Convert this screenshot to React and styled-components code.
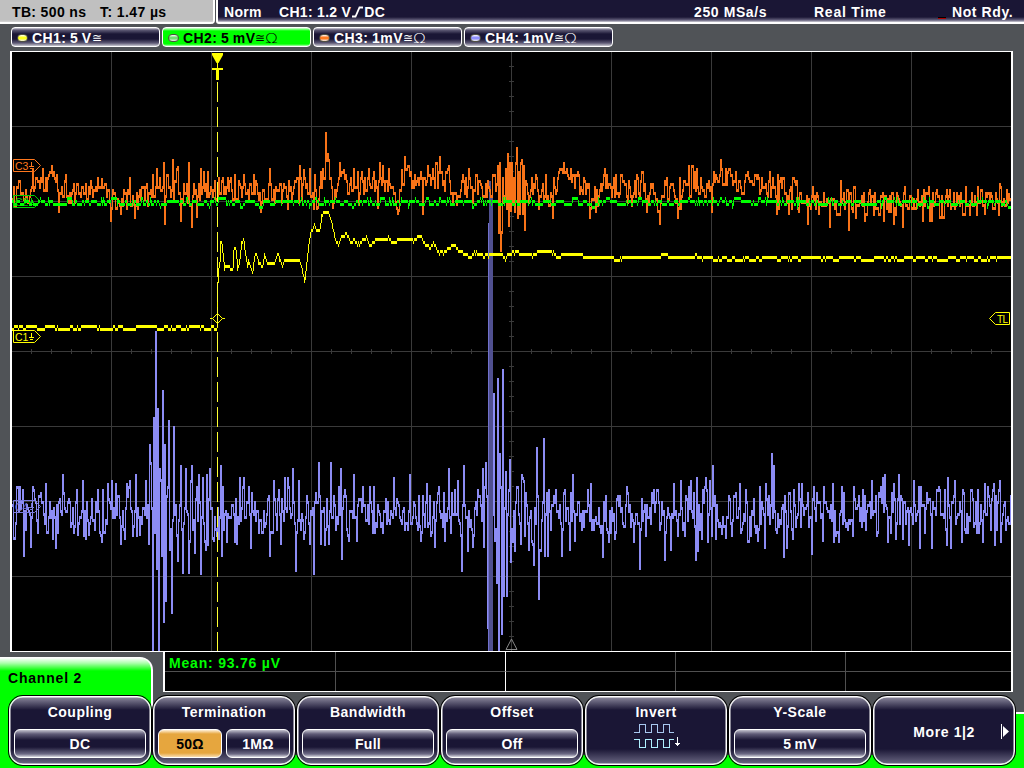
import React from 'react';
import styled, { createGlobalStyle, css } from 'styled-components';

const GlobalStyle = createGlobalStyle`
  body {
    margin: 0;
    background: #505357;
    overflow: hidden;
  }
`;

const NAVY = '#1a1635';

const Screen = styled.div`
  width: 1024px;
  height: 768px;
  display: flex;
  flex-direction: column;
  overflow: hidden;
  background: #505357;
  color: #fff;
  font: bold 14px 'Liberation Sans', Arial, sans-serif;
  letter-spacing: 0.6px;
  white-space: pre;
`;

const Header = styled.div`
  display: flex;
  height: 24px;
  line-height: 24px;
  flex: none;
`;

const TimeBase = styled.div`
  width: 215px;
  padding-left: 12px;
  box-sizing: border-box;
  display: grid;
  grid-template-columns: 88px 1fr;
  color: #000;
  background: linear-gradient(#c0c0c0 20px, #d8d8d8 22px, #fff 22px);
  border-right: 2px solid #fff;
  border-bottom-right-radius: 4px;
`;

const TriggerBar = styled.div`
  flex: 1;
  margin-left: 1px;
  padding-left: 6px;
  display: grid;
  grid-template-columns: 55px 415px 120px 138px 1fr;
  background: linear-gradient(${NAVY} 17px, #605c78 20px, #d0cfd8 22px, #fff 22px);
  border-left: 2px solid #fff;
  border-bottom-left-radius: 3px;
`;

const Item = styled.span`
  letter-spacing: ${(p) => p.$ls || 0.6}px;
`;

const NotReady = styled(Item)`
  display: flex;
  align-items: center;
  margin-left: -13px;

  &::before {
    content: '';
    width: 8px;
    height: 1px;
    margin: 12px 6px 0 -1px;
    background: #b00000;
    border-top: 1px solid #000;
  }
`;

const Channels = styled.div`
  display: flex;
  gap: 2px;
  padding: 3px 0 0 11px;
  height: 24px;
  flex: none;
`;

const Tag = styled.div`
  width: 149px;
  height: 20px;
  box-sizing: border-box;
  border: 1px solid #fff;
  border-radius: 4px;
  padding: 1px 0 0 5px;
  display: flex;
  align-items: center;
  letter-spacing: 0.45px;
  word-spacing: -0.8px;
  color: ${(p) => (p.$active ? '#000' : '#fff')};
  background: ${(p) =>
    p.$active
      ? 'linear-gradient(#d8ffd8, #00ff00 3px, #00ff00 16px, #b0ffb0)'
      : `linear-gradient(#d0cfd8, #5e5a75 2px, ${NAVY} 6px, ${NAVY} 11px, #5e5a75 15px, #c8c8d0)`};
`;

const Led = styled.span`
  width: 9px;
  height: 6px;
  margin-right: 4px;
  border-radius: 4px;
  border: 1px solid #505040;
  background: linear-gradient(#fff, ${(p) => p.$color} 40%, ${(p) => p.$color} 60%, #eee);
`;

const Thin = styled.span`
  font: ${(p) => p.$size}px 'DejaVu Sans', sans-serif;
  font-weight: 200;
  letter-spacing: 0;
  line-height: 16px;
  transform: scaleX(${(p) => p.$stretch || 1});
  transform-origin: left;
`;

const Scope = styled.div`
  width: 999px;
  height: 599px;
  flex: none;
  margin-left: 10px;
  background: #000;
  border: solid #fff;
  border-width: 1px 2px;

  svg {
    display: block;
  }
`;

const Measurements = styled.div`
  position: absolute;
  left: 163px;
  top: 651px;
  width: 850px;
  height: 41px;
  box-sizing: border-box;
  display: grid;
  grid-template-columns: 171px 170px 170px 170px 1fr;
  grid-template-rows: 20px 19px;
  border: solid #fff;
  border-width: 1px 2px;
  background: #000;
`;

const Cell = styled.div`
  box-sizing: border-box;
  color: #00ff00;
  line-height: 22px;
  padding-left: 4px;
  letter-spacing: 0.8px;
  border-bottom: ${(p) => (p.$top ? '1px solid #505050' : 'none')};
  border-right: ${(p) => (p.$last ? 'none' : `1px solid ${p.$center ? '#fff' : '#505050'}`)};
`;

const MenuArea = styled.div`
  flex: 1;
  display: flex;
  flex-direction: column;
  margin-top: -1px;
`;

const MenuTitle = styled.div`
  width: 153px;
  height: 38px;
  margin-top: 6px;
  box-sizing: border-box;
  padding: 12px 0 0 8px;
  color: #000;
  letter-spacing: 0.8px;
  border-right: 2px solid #fff;
  border-top: 1px solid #fff;
  border-top-right-radius: 13px;
  background: linear-gradient(#fff, #b0ffb0 5px, #00ff00 13px);
`;

const MenuBar = styled.div`
  flex: 1;
  display: flex;
  padding: 1px 8px 0;
  background:
    linear-gradient(#00ff00, #00ff00) 0 0 / 151px 100% no-repeat,
    linear-gradient(#fff, #fff) 151px 0 / 2px 14px no-repeat,
    linear-gradient(#505357 17px, #fff 17px, #fff 19px, #00ff00 19px) 1016px 0 / 8px 100% no-repeat,
    linear-gradient(#505357 60px, #00ff00 60px);
`;

const MenuItem = styled.div`
  width: 142px;
  height: 69px;
  margin: 0 1px;
  box-sizing: border-box;
  padding: 6px 4px 0;
  border: 1px solid #fff;
  border-radius: 14px;
  display: flex;
  flex-direction: column;
  align-items: center;
  background: linear-gradient(#8c899e, ${NAVY} 13px, ${NAVY} 52px, #6c6984);
  box-shadow: 0 0 0 1px #000, inset 0 0 0 0.5px #fff;
`;

const MenuLabel = styled.div`
  height: 26px;
  line-height: 18px;
  letter-spacing: 0.5px;
  flex: none;
`;

const Choices = styled.div`
  display: flex;
  gap: 4px;
  width: 132px;
`;

const Choice = styled.div`
  flex: 1;
  height: 29px;
  line-height: 29px;
  box-sizing: border-box;
  text-align: center;
  border: 1px solid #fff;
  border-radius: 6px;
  letter-spacing: 0.3px;
  word-spacing: -1px;
  background: linear-gradient(#c4c3cf, #5f5b77 4px, ${NAVY} 10px, ${NAVY} 17px, #6c6984 24px, #d8d8e0);
  ${(p) =>
    p.$selected &&
    css`
      color: #000;
      background: linear-gradient(#fff0d8, #e6a63e 4px, #e6a63e 23px, #f8dcb0);
    `}
`;

const InvertWrap = styled.div`
  margin: -6px 0 0 4px;
`;

const More = styled.div`
  display: flex;
  align-items: center;
  width: 100%;
  height: 57px;
  justify-content: flex-end;
  gap: 25px;
`;

// mulberry32
const rand = (seed) => {
  let a = seed;
  return () => {
    a = (a + 0x6d2b79f5) | 0;
    let t = Math.imul(a ^ (a >>> 15), 1 | a);
    t = (t + Math.imul(t ^ (t >>> 7), 61 | t)) ^ t;
    return ((t ^ (t >>> 14)) >>> 0) / 4294967296;
  };
};

const lerp = (pts, x) => {
  const i = pts.findIndex((p) => p[0] > x);
  if (i === 0) return pts[0][1];
  if (i < 0) return pts[pts.length - 1][1];
  const [x0, y0] = pts[i - 1];
  const [x1, y1] = pts[i];
  return y0 + ((y1 - y0) * (x - x0)) / (x1 - x0);
};

// flat list "x,y x,y" -> [[x, y], ...]
const parse = (s) => s.trim().split(/\s+/).map((p) => p.split(',').map(Number));

// one vertical stroke per pixel column, each level is 3px tall
// solid keeps the full swing in both columns, so peaks are 2px wide
const columns = (ys, solid) => {
  let d = '';
  for (let i = 0; i < ys.length; i++) {
    const y = ys[i];
    const prev = ys[Math.max(0, i - 1)];
    const top = y > prev ? prev + (solid ? -1 : 2) : y - 1;
    const bottom = y < prev ? prev + (solid ? 2 : -1) : y + 2;
    d += `M${i + 12.5} ${top}V${bottom}`;
  }
  return d;
};

const quant = (y, base) => base + Math.round((y - base) / 3) * 3;

const noise = ({ seed, mean, amp, spikes, base, hold, solid }) => {
  const r = rand(seed);
  const ys = [];
  let y = mean[0][1];
  for (let x = 12; x < 1011; x++) {
    if (r() > hold) y = lerp(mean, x) + (r() + r() + r() - 1.5) * lerp(amp, x);
    ys.push(quant(y, base));
  }
  const used = {};
  spikes.forEach(([x, v]) => {
    let i = x - 12;
    while (used[i]) i++;
    used[i] = true;
    ys[i] = v;
  });
  return columns(ys, solid);
};

const CH4 = noise({
  seed: 77,
  base: 511,
  hold: 0.08,
  solid: true,
  mean: [[12, 511], [150, 513], [200, 513], [1011, 512]],
  amp: [[12, 26], [145, 26], [152, 50], [200, 36], [225, 29], [300, 27], [480, 28], [486, 65], [512, 38], [545, 31], [560, 25], [1011, 26]],
  spikes: parse(`23,555 22,490 30,546 32,487 40,493 62,475 52,538 77,534 82,481 88,534 97,490 111,481 115,484 120,543 126,484
    129,481 135,475 139,534 148,543 149,445 152,660 153,418 155,332 156,568 157,409 158,660 160,480 162,391 161,555 163,621 164,445
    165,600 168,421 169,549 171,612 173,427 177,560 180,466 182,572 185,469 188,572 191,466 194,552 198,475 200,573
    202,478 205,549 209,469 213,540 220,466 221,555 222,487 236,543 243,478 248,487 269,555 273,481 280,543 284,478
    287,478 292,469 295,570 298,481 309,543 313,573 318,463 320,543 328,543 330,463 340,469 341,558 348,540 353,475
    356,540 362,487 393,478 409,475 420,540 426,484 434,546 438,487 444,540 448,469 457,481 461,570 463,466 472,546
    482,469 483,546 487,627 493,394 494,540 496,582 497,379 498,660 499,454 501,633 502,370 503,595 505,472 506,595
    509,460 510,561 521,475 520,543 528,549 533,564 536,448 538,598 543,439 544,555 547,555 555,490 561,555 569,549
    572,475 574,540 590,484 600,532 602,556 605,496 608,541 619,496 627,493 633,541 639,568 641,499 645,535 653,490
    657,490 664,559 670,549 673,484 677,535 680,481 684,535 688,487 695,559 696,478 697,550 701,538 706,490 709,481
    711,535 712,466 721,533 725,537 735,493 739,484 740,532 745,490 750,535 757,540 759,487 764,547 765,484 771,454
    773,466 775,529 783,556 786,547 789,493 793,490 798,484 801,484 811,553 816,493 822,540 823,487 832,484 833,541
    841,487 853,487 852,535 862,490 871,481 876,535 882,478 884,475 893,484 895,538 898,475 908,544 919,547 920,487
    926,493 931,547 936,490 944,490 946,544 954,481 961,541 963,493 970,490 976,532 984,484 982,541 993,484 994,544
    998,490 1000,541`),
});

const CH3 = noise({
  seed: 4242,
  base: 190,
  hold: 0.2,
  solid: true,
  mean: parse(`12,196 26,193 35,183 50,181 58,193 90,190 105,192 115,200 130,200 150,192 165,189 200,190 260,190 290,188 305,186
    310,192 316,202 321,178 326,163 330,190 334,195 341,180 370,186 385,178 397,200 401,182 405,166 412,182 430,182 440,174
    446,180 455,192 475,187 490,190 520,190 540,182 550,198 560,175 580,180 590,200 605,183 630,192 640,185 655,200
    668,185 678,200 684,186 692,178 708,192 718,178 750,181 765,187 790,195 810,202 850,202 890,205 930,204 960,200 1011,200`),
  amp: [[12, 14], [145, 14], [160, 20], [195, 17], [205, 13], [300, 15], [490, 14], [498, 40], [523, 40], [526, 15], [1011, 14]],
  spikes: parse(`32,169 42,169 53,172 58,211 65,175 97,178 101,179 110,220 120,213 129,178 134,217 152,175 156,169 163,163 164,223
    172,160 177,167 180,220 188,163 191,226 196,216 200,169 207,172 222,178 234,175 243,175 253,175 260,211 269,169
    299,166 303,170 309,169 314,175 317,207 322,169 325,133 327,154 328,160 332,207 339,163 343,170 353,169 358,204
    368,169 373,172 377,207 379,163 388,169 397,213 398,210 401,170 404,157 407,166 413,187 420,172 422,213 427,166
    432,169 439,157 448,166 456,204 468,169 498,232 499,163 500,250 501,232 502,178 505,169 506,208 507,154 508,225
    509,163 510,210 511,163 512,204 513,178 514,211 515,163 516,148 517,217 518,172 519,213 520,163 521,160 522,213 523,166
    524,229 531,178 535,175 538,208 545,175 552,217 558,172 560,169 565,172 577,172 583,178 589,217 595,211 603,175
    615,175 637,178 646,211 650,184 659,223 664,181 670,184 677,217 683,181 688,166 694,172 696,169 711,211 720,160
    728,169 731,175 745,175 754,175 757,175 768,181 776,213 779,181 788,213 794,181 807,223 812,187 818,213 829,226
    840,181 848,229 853,187 864,220 869,190 883,220 893,223 902,226 904,187 917,190 922,220 928,187 931,220 943,217
    946,190 965,187 984,213 1000,187 1008,194`),
});

const CH2 = noise({
  seed: 19,
  base: 201,
  hold: 0.45,
  mean: [[12, 201.9], [1011, 201.9]],
  amp: [[12, 4.2], [1011, 4.2]],
  spikes: [],
});

const CH1_POINTS = parse(`12,327.5 216,327.5 217,284 218,268 219,264 220,242 221,241 222,252 224,268 227,265 230,269 232,268 233,252
  235,247 237,268 239,262 241,243 243,241 245,256 247,267 248,261 252,270 254,256 256,252 258,262 262,264 264,255 267,263
  274,263 277,254 282,266 285,260 299,260 302,270 304,279 306,262 309,238 311,231 314,225 317,231 319,229 321,215
  324,212 328,212 331,222 334,236 338,245 342,234 346,233 350,242 354,240 357,245 361,240 366,236 370,245 376,239
  386,239 388,237 391,242 400,239 411,239 413,242 417,237 421,237 425,244 430,248 433,243 437,251 443,253 448,248
  454,245 458,250 461,249 464,254 470,256 476,252 481,255 484,256 490,254 495,253 502,255 505,259 508,254 520,252
  530,256 535,253 541,251 548,250 553,253 557,257 562,254 580,254 583,257 612,257 617,260 625,257 660,257 662,255
  667,255 669,257 694,257 695,254 697,257.8 1011,258`);

const CH1 = (() => {
  const r = rand(5);
  const ys = [];
  let jitter = 0;
  for (let x = 12; x < 1011; x++) {
    if (r() > 0.6) {
      const a = x < 216 ? 5 : x > 695 ? 4 : 2.4;
      jitter = (r() - 0.5) * a;
    }
    ys.push(quant(lerp(CH1_POINTS, x) + jitter, 257));
  }
  return columns(ys);
})();

const range = (n) => Array.from({ length: n }, (_, i) => i);

const Flag = ({ y, color, text }) => (
  <g stroke={color} fill="none">
    <path d={`M13.5 ${y - 6.5}H34.5L40.5 ${y - 0.5}L34.5 ${y + 5.5}H13.5Z`} />
    <text x="15" y={y + 3.5} fill={color} stroke="none" fontSize="10.5" fontFamily="Liberation Sans" fontWeight="normal" letterSpacing="0">
      {text}
    </text>
    <path d={`M31.5 ${y - 4}V${y + 0.5}M29 ${y + 0.5}H34M30 ${y + 2.5}H33`} />
  </g>
);

const Graticule = () => (
  <g stroke="#3a3a3a" shapeRendering="crispEdges">
    {range(9).map((i) => (
      <path key={i} d={`M${111.5 + i * 100} 52V651`} />
    ))}
    {range(7).map((i) => (
      <path key={i} d={`M12 ${126.5 + i * 75}H1011`} />
    ))}
    {range(49).map((i) => (
      <path key={i} d={`M${31.5 + i * 20} 349V354`} />
    ))}
    {range(39).map((i) => (
      <path key={i} d={`M509 ${66.5 + i * 15}H514`} />
    ))}
  </g>
);

const ScopeView = () => (
  <svg width="999" height="599" viewBox="12 52 999 599">
    <Graticule />
    <path d="M511.5 639L517 649.5H506Z" fill="none" stroke="#888" />
    <g shapeRendering="crispEdges" fill="none">
      <path d={CH4} stroke="#8c8cf4" />
      <path d="M488.5 223V651" stroke="#7070cc" />
      <path d="M490 181V651" stroke="#505090" strokeWidth="2" />
      <path d="M492 196V651" stroke="#505090" strokeWidth="2" />
    </g>
    <Flag y={507} color="#7878dc" text="C4" />
    <Flag y={166} color="#ff781e" text="C3" />
    <path d={CH3} stroke="#f87318" shapeRendering="crispEdges" />
    <Flag y={202} color="#00d000" text="C2" />
    <path d={CH2} stroke="#00ff00" shapeRendering="crispEdges" />
    <path d={CH1} stroke="#ffff00" shapeRendering="crispEdges" />
    <Flag y={337} color="#ffff00" text="C1" />
    <path d="M217.5 82V651" stroke="#ffff30" strokeDasharray="20 5" shapeRendering="crispEdges" />
    <path d="M212 53H223V55L218.5 63H216.5L212 55ZM217 63H218V68H223V70H219V80H216V70H212V68H217Z" fill="#ffff00" />
    <path d="M210 318.5H212.5L217.5 313.5L222.5 318.5H225M212.5 318.5L217.5 323.5L222.5 318.5" fill="none" stroke="#ffff00" />
    <path d="M989.5 318.5L995.5 312.5H1009.5V324.5H995.5Z" fill="none" stroke="#ffff00" />
    <text x="997" y="322.5" fill="#ffff00" fontSize="10" fontFamily="Liberation Sans" fontWeight="normal" letterSpacing="-0.5">
      TL
    </text>
  </svg>
);

const InvertIcon = () => (
  <svg width="48" height="28" viewBox="0 0 48 28" fill="none" shapeRendering="crispEdges">
    <path d="M0 9.5H5.5V1.5H11.5V9.5H17.5V1.5H23.5V9.5H29.5V1.5H35.5V9.5H40" stroke="#a8c8f0" />
    <path d="M0 16.5H5.5V24.5H11.5V16.5H17.5V24.5H23.5V16.5H29.5V24.5H35.5V16.5H40" stroke="#b0f0ff" />
    <path d="M43.5 14V23M41 20.5H46M42 21.5H45" stroke="#fff" />
  </svg>
);

const TriggerEdge = () => (
  <svg width="13" height="12" viewBox="0 0 13 12" style={{ verticalAlign: -1 }}>
    <path d="M1 10.5H4.5L8.5 1.5H12" fill="none" stroke="#fff" strokeWidth="1.8" />
  </svg>
);

const tags = [
  { name: 'CH1: 5 V', color: '#ffff20' },
  { name: 'CH2: 5 mV', ohm: true, color: '#70e070', active: true },
  { name: 'CH3: 1mV', ohm: true, color: '#ff7a20' },
  { name: 'CH4: 1mV', ohm: true, color: '#9090ff' },
];

const menu = [
  { label: 'Coupling', choices: ['DC'] },
  { label: 'Termination', choices: ['50Ω', '1MΩ'], selected: 0 },
  { label: 'Bandwidth', choices: ['Full'] },
  { label: 'Offset', choices: ['Off'] },
  { label: 'Invert', icon: true },
  { label: 'Y-Scale', choices: ['5 mV'] },
];

const App = () => {
  return (
    <>
      <GlobalStyle />
      <Screen>
        <Header>
          <TimeBase>
            <Item $ls={0.35}>TB: 500 ns</Item>
            <Item $ls={0.4}>T: 1.47 µs</Item>
          </TimeBase>
          <TriggerBar>
            <Item $ls={0.3}>Norm</Item>
            <Item $ls={0.3}>CH1: 1.2 V<TriggerEdge />DC</Item>
            <Item $ls={0.6}>250 MSa/s</Item>
            <Item $ls={0.75}>Real Time</Item>
            <NotReady>Not Rdy.</NotReady>
          </TriggerBar>
        </Header>
        <Channels>
          {tags.map((t) => (
            <Tag key={t.name} $active={t.active}>
              <Led $color={t.color} />
              {t.name}
              <Thin $size={12}>≅</Thin>
              {t.ohm && <Thin $size={14} $stretch={1.2}>Ω</Thin>}
            </Tag>
          ))}
        </Channels>
        <Scope>
          <ScopeView />
        </Scope>
        <MenuArea>
          <MenuTitle>Channel 2</MenuTitle>
          <MenuBar>
            {menu.map((m) => (
              <MenuItem key={m.label}>
                <MenuLabel>{m.label}</MenuLabel>
                {m.icon ? (
                  <InvertWrap>
                    <InvertIcon />
                  </InvertWrap>
                ) : (
                  <Choices>
                    {m.choices.map((c, i) => (
                      <Choice key={c} $selected={m.selected === i}>{c}</Choice>
                    ))}
                  </Choices>
                )}
              </MenuItem>
            ))}
            <MenuItem>
              <More>
                More 1|2
                <svg width="10" height="15" viewBox="0 0 10 15">
                  <path d="M1.5 0V15" stroke="#fff" />
                  <path d="M3 2L9 7.5L3 13Z" fill="#fff" />
                </svg>
              </More>
            </MenuItem>
          </MenuBar>
        </MenuArea>
        <Measurements>
          {range(10).map((i) => (
            <Cell key={i} $top={i < 5} $center={i % 5 === 1} $last={i % 5 === 4}>
              {i === 0 ? 'Mean: 93.76 µV' : ''}
            </Cell>
          ))}
        </Measurements>
      </Screen>
    </>
  );
};

export default App;
